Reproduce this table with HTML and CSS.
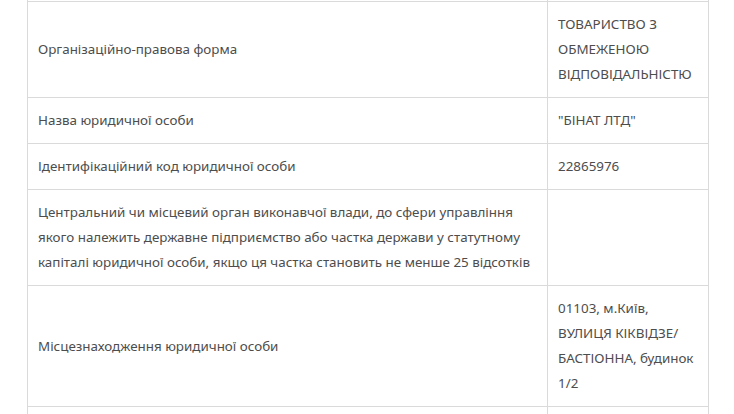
FILE: index.html
```html
<!DOCTYPE html>
<html lang="uk"><head><meta charset="utf-8"><link rel="stylesheet" href="styles.css"></head>
<body>
<table class="info">
  <tbody>
    <tr class="row">
      <td class="label">&nbsp;</td>
      <td class="value">&nbsp;</td>
    </tr>
    <tr class="row">
      <td class="label">Організаційно-правова форма</td>
      <td class="value">ТОВАРИСТВО З ОБМЕЖЕНОЮ ВІДПОВІДАЛЬНІСТЮ</td>
    </tr>
    <tr class="row">
      <td class="label">Назва юридичної особи</td>
      <td class="value">"БІНАТ ЛТД"</td>
    </tr>
    <tr class="row">
      <td class="label">Ідентифікаційний код юридичної особи</td>
      <td class="value">22865976</td>
    </tr>
    <tr class="row">
      <td class="label">Центральний чи місцевий орган виконавчої влади, до сфери управління якого належить державне підприємство або частка держави у статутному капіталі юридичної особи, якщо ця частка становить не менше 25 відсотків</td>
      <td class="value"></td>
    </tr>
    <tr class="row">
      <td class="label">Місцезнаходження юридичної особи</td>
      <td class="value">01103, м.Київ, ВУЛИЦЯ КІКВІДЗЕ/<wbr>БАСТІОННА, будинок 1/2</td>
    </tr>
    <tr class="row">
      <td class="label">&nbsp;</td>
      <td class="value">&nbsp;</td>
    </tr>
  </tbody>
</table>
</body></html>
```
FILE: styles.css
```css
html, body {
  margin: 0;
  padding: 0;
  background: #fff;
  overflow: hidden;
}
body {
  padding-left: 27px;
  font-family: "Noto Sans", "Open Sans", sans-serif;
  font-size: 13.4px;
  line-height: 25px;
  color: #4d4d4d;
}
.info {
  border-collapse: collapse;
  margin-top: -45px;
  table-layout: fixed;
  width: 682px;
}
.row td {
  border: 1px solid #dadada;
  padding: 10px;
  vertical-align: middle;
  text-align: left;
}
.label {
  width: 499px;
}
.value {
  width: 140px;
}
```
